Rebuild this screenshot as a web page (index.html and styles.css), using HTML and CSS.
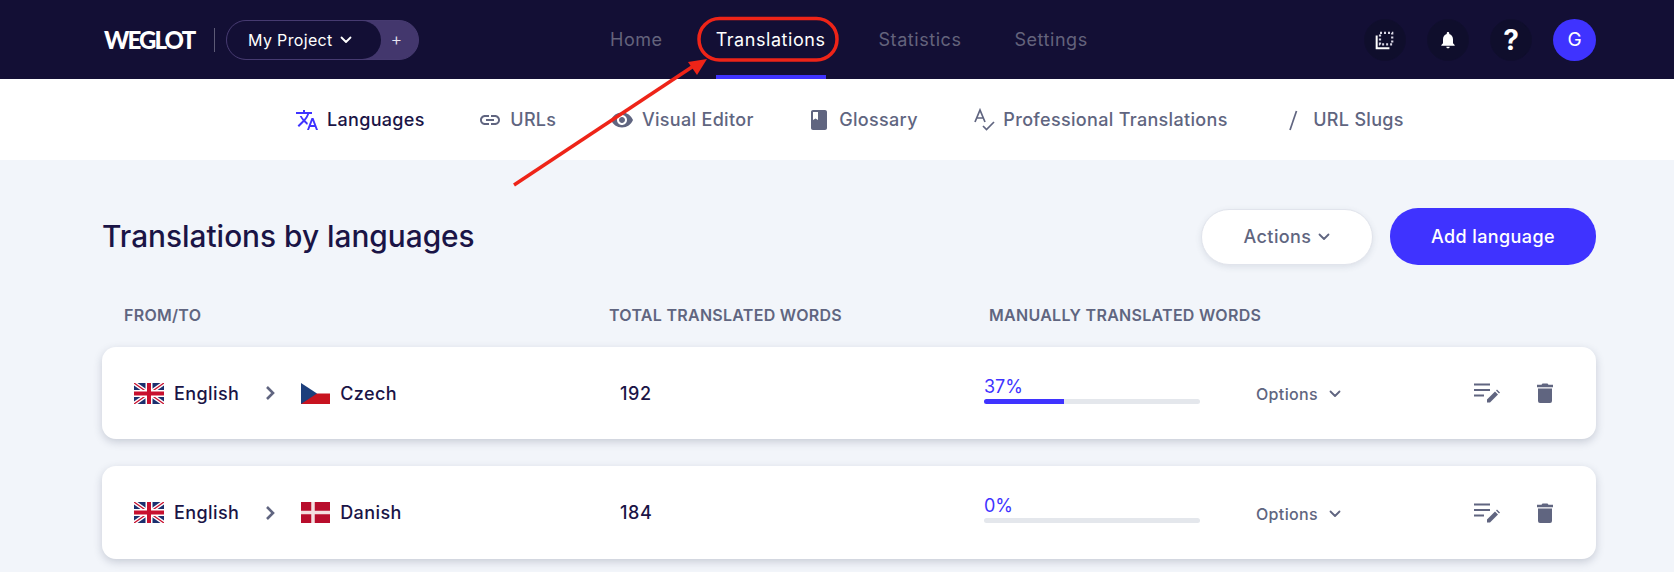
FILE: index.html
```html
<!DOCTYPE html>
<html lang="en">
<head>
<meta charset="utf-8">
<title>Weglot translations</title>
<link rel="stylesheet" href="styles.css">
</head>
<body>
<header class="topbar">
  <div class="brand">
    <span class="logo">WEGLOT</span>
    <span class="divider"></span>
    <div class="project">
      <span class="project-name">My Project
        <svg class="chev-sm" viewBox="0 0 12 8"><path d="M1.5 1.500 6 6l4.500-4.500"/></svg>
      </span>
      <span class="project-add">+</span>
    </div>
  </div>
  <nav class="mainnav">
    <a class="mainlink">Home</a>
    <a class="mainlink is-active">Translations</a>
    <a class="mainlink">Statistics</a>
    <a class="mainlink">Settings</a>
  </nav>
  <div class="tools">
    <span class="round">
      <svg class="tool-icon" viewBox="0 0 18 18"><path class="solid-line" d="M1.500 5v11.500H13"/><path class="dots" d="M4.500 2.500h11v10.500h-11z"/></svg>
    </span>
    <span class="round">
      <svg class="tool-icon" viewBox="0 0 24 24"><path fill="#fff" d="M12 22c1.100 0 2-.9 2-2h-4c0 1.100.89 2 2 2zm6-6v-5c0-3.070-1.640-5.640-4.500-6.320V4c0-.83-.67-1.500-1.500-1.500s-1.500.67-1.500 1.500v.68C7.630 5.360 6 7.920 6 11v5l-2 2v1h16v-1l-2-2z"/></svg>
    </span>
    <span class="round round-q">?</span>
    <span class="avatar">G</span>
  </div>
</header>

<nav class="subnav">
  <a class="sublink is-current">
    <svg class="sub-icon" viewBox="0 0 24 24"><path d="M12.870 15.070l-2.540-2.510.03-.03c1.740-1.940 2.980-4.170 3.710-6.530H17V4h-7V2H8v2H1v1.990h11.170C11.500 7.920 10.440 9.750 9 11.350 8.070 10.320 7.300 9.190 6.690 8h-2c.73 1.630 1.730 3.170 2.980 4.560l-5.090 5.020L4 19l5-5 3.110 3.110.76-2.040zM18.500 10h-2L12 22h2l1.120-3h4.750L21 22h2l-4.500-12zm-2.620 7l1.620-4.330L19.120 17h-3.240z"/></svg>
    Languages
  </a>
  <a class="sublink">
    <svg class="sub-icon" viewBox="0 0 24 24"><path d="M3.900 12c0-1.710 1.390-3.100 3.100-3.100h4V7H7c-2.760 0-5 2.240-5 5s2.240 5 5 5h4v-1.900H7c-1.710 0-3.100-1.390-3.100-3.100zM8 13h8v-2H8v2zm9-6h-4v1.900h4c1.710 0 3.100 1.390 3.100 3.100s-1.390 3.100-3.100 3.100h-4V17h4c2.760 0 5-2.240 5-5s-2.240-5-5-5z"/></svg>
    URLs
  </a>
  <a class="sublink">
    <svg class="sub-icon" viewBox="0 0 24 24"><path d="M12 4.500C7 4.500 2.730 7.610 1 12c1.730 4.390 6 7.500 11 7.500s9.270-3.110 11-7.500c-1.730-4.390-6-7.500-11-7.500zM12 17c-2.760 0-5-2.240-5-5s2.240-5 5-5 5 2.240 5 5-2.240 5-5 5zm0-8c-1.660 0-3 1.340-3 3s1.340 3 3 3 3-1.340 3-3-1.340-3-3-3z"/></svg>
    Visual Editor
  </a>
  <a class="sublink">
    <svg class="sub-icon" viewBox="0 0 24 24"><path d="M18 2H6c-1.100 0-2 .9-2 2v16c0 1.100.9 2 2 2h12c1.100 0 2-.9 2-2V4c0-1.100-.9-2-2-2zM6 4h5v8l-2.500-1.500L6 12V4z"/></svg>
    Glossary
  </a>
  <a class="sublink">
    <svg class="sub-icon sub-stroke" viewBox="0 0 24 24"><path d="M4 14 9 2l5 12M5.800 10h6.400M12 18l3.500 3.500L23 14"/></svg>
    Professional Translations
  </a>
  <a class="sublink">
    <svg class="sub-icon sub-stroke" viewBox="0 0 24 24"><path d="M15.500 3 9 22"/></svg>
    URL Slugs
  </a>
</nav>

<main class="content">
  <div class="title-row">
    <h1 class="title">Translations by languages</h1>
    <div class="actions">
      <button class="btn btn-light">Actions
        <svg class="chev-sm" viewBox="0 0 12 8"><path d="M1.500 1.500 6 6l4.500-4.500"/></svg>
      </button>
      <button class="btn btn-primary">Add language</button>
    </div>
  </div>

  <div class="col-heads">
    <span class="head-from">FROM/TO</span>
    <span class="head-total">TOTAL TRANSLATED WORDS</span>
    <span class="head-manual">MANUALLY TRANSLATED WORDS</span>
  </div>

  <section class="card">
    <div class="pair">
      <svg class="flag" viewBox="0 0 30 21"><use href="#uk"/></svg>
      <span class="lang">English</span>
      <svg class="pair-arrow" viewBox="0 0 10 16"><path d="M2 2l6 6-6 6"/></svg>
      <svg class="flag flag-target" viewBox="0 0 29 21"><rect width="29" height="10.500" fill="#fff"/><rect y="10.500" width="29" height="10.500" fill="#c8131f"/><path d="M0 0l16 10.500L0 21z" fill="#1d3f7c"/></svg>
      <span class="lang">Czech</span>
    </div>
    <div class="count">192</div>
    <div class="progress">
      <div class="pct">37%</div>
      <div class="track"><div class="fill" style="width:37%"></div></div>
    </div>
    <div class="options">Options
      <svg class="chev-sm" viewBox="0 0 12 8"><path d="M1.500 1.500 6 6l4.500-4.500"/></svg>
    </div>
    <svg class="edit-icon" viewBox="0 0 26 24"><path class="edit-lines" d="M0 3.500h16M0 9h16M0 14.500h10"/><path class="edit-pen" d="M13 21.500v-3l8-8 3 3-8 8zM22 9.500l1-1 3 3-1 1z"/></svg>
    <svg class="trash-icon" viewBox="0 0 16 20"><path d="M1 5.500h14V18a2 2 0 0 1-2 2H3a2 2 0 0 1-2-2zM0 1.800h4.500L5.500.5h5l1 1.300H16v2.400H0z"/></svg>
  </section>

  <section class="card">
    <div class="pair">
      <svg class="flag" viewBox="0 0 30 21"><use href="#uk"/></svg>
      <span class="lang">English</span>
      <svg class="pair-arrow" viewBox="0 0 10 16"><path d="M2 2l6 6-6 6"/></svg>
      <svg class="flag flag-target" viewBox="0 0 29 21"><rect width="29" height="21" fill="#b80d2c"/><path d="M0 10.500h29M12 0v21" stroke="#f4dfe0" stroke-width="3.500"/></svg>
      <span class="lang">Danish</span>
    </div>
    <div class="count">184</div>
    <div class="progress">
      <div class="pct">0%</div>
      <div class="track"><div class="fill" style="width:0%"></div></div>
    </div>
    <div class="options">Options
      <svg class="chev-sm" viewBox="0 0 12 8"><path d="M1.500 1.500 6 6l4.500-4.500"/></svg>
    </div>
    <svg class="edit-icon" viewBox="0 0 26 24"><path class="edit-lines" d="M0 3.500h16M0 9h16M0 14.500h10"/><path class="edit-pen" d="M13 21.500v-3l8-8 3 3-8 8zM22 9.500l1-1 3 3-1 1z"/></svg>
    <svg class="trash-icon" viewBox="0 0 16 20"><path d="M1 5.500h14V18a2 2 0 0 1-2 2H3a2 2 0 0 1-2-2zM0 1.800h4.500L5.500.5h5l1 1.300H16v2.400H0z"/></svg>
  </section>
</main>

<svg class="defs" width="0" height="0">
  <defs>
    <g id="uk">
      <rect width="30" height="21" fill="#1c2f6e"/>
      <path d="M0 0l30 21M30 0 0 21" stroke="#fff" stroke-width="4"/>
      <path d="M0 0l30 21M30 0 0 21" stroke="#c8102e" stroke-width="1.300"/>
      <path d="M15 0v21M0 10.500h30" stroke="#fff" stroke-width="7"/>
      <path d="M15 0v21M0 10.500h30" stroke="#c8102e" stroke-width="4"/>
    </g>
  </defs>
</svg>

<svg class="annotation" viewBox="0 0 1674 572">
  <rect class="mark" x="699" y="18.500" width="138" height="41.500" rx="20.500"/>
  <path class="mark" d="M514 185 695 65"/>
  <path class="mark-head" d="M707 59 688 62 697 75z"/>
</svg>
</body>
</html>
```
FILE: styles.css
```css
* { box-sizing: border-box; }
html, body { margin: 0; height: 572px; overflow: hidden; }
body {
  position: relative;
  background: #f2f5fa;
  font-family: Inter, "Liberation Sans", sans-serif;
  color: #1a1446;
}
.defs { position: absolute; }

/* top bar */
.topbar {
  display: flex;
  align-items: center;
  height: 79px;
  padding: 0 78px 0 104px;
  background: #130f35;
  color: #fff;
}
.brand { display: flex; align-items: center; width: 506px; }
.logo {
  width: 93px;
  font-family: Lato, "Liberation Sans", sans-serif;
  font-size: 24px;
  font-weight: 900;
  letter-spacing: -1.9px;
  line-height: 1;
}
.divider { width: 1px; height: 24px; margin: 0 11px 0 17px; background: #5d5a76; }
.project {
  display: flex;
  align-items: center;
  width: 193px;
  height: 40px;
  border: 1px solid #463a70;
  border-radius: 20px;
  background: #43376d;
}
.project-name {
  display: flex;
  align-items: center;
  gap: 7px;
  width: 154px;
  height: 38px;
  padding-left: 21px;
  border-radius: 19px;
  background: #130f35;
  font-size: 16px;
  letter-spacing: .35px;
}
.project-add {
  flex: 1;
  padding-right: 6px;
  text-align: center;
  font-size: 18px;
  font-weight: 300;
  color: #e8e6f2;
}
.chev-sm { width: 12px; height: 8px; flex: none; }
.chev-sm path { fill: none; stroke: currentColor; stroke-width: 1.800; stroke-linecap: round; stroke-linejoin: round; }

.mainnav { display: flex; align-items: stretch; gap: 53px; height: 79px; }
.mainlink {
  display: flex;
  align-items: center;
  border-bottom: 4px solid transparent;
  border-top: 4px solid transparent;
  font-size: 18px;
  font-weight: 400;
  letter-spacing: .55px;
  color: #64637c;
}
.mainlink.is-active { color: #fff; border-bottom-color: #3f33ff; }

.tools { display: flex; align-items: center; gap: 21px; margin-left: auto; }
.round, .avatar {
  display: flex;
  align-items: center;
  justify-content: center;
  width: 42px;
  height: 42px;
  border-radius: 50%;
}
.round { background: #0f0e2c; border: 1px solid #100e2e; }
.round-q { font-size: 28px; font-weight: 700; line-height: 1; }
.avatar { background: #3f33ff; font-size: 19px; width: 43px; }
.tool-icon { width: 20px; height: 20px; }
.solid-line { fill: none; stroke: #fff; stroke-width: 1.800; }
.dots { fill: none; stroke: #d8d6e4; stroke-width: 2; stroke-dasharray: 1.800 1.800; }

/* sub navigation */
.subnav {
  display: flex;
  align-items: center;
  height: 81px;
  padding-left: 295px;
  background: #fff;
}
.sublink {
  display: flex;
  align-items: center;
  gap: 8px;
  margin-right: 53.500px;
  font-size: 18px;
  font-weight: 500;
  letter-spacing: .32px;
  color: #606580;
}
.sublink.is-current { color: #1a1446; }
.sub-icon { width: 24px; height: 24px; fill: #606580; flex: none; }
.is-current .sub-icon { fill: #3f33ff; }
.sub-stroke { fill: none; stroke: #606580; stroke-width: 1.700; }

/* content */
.content { padding: 48px 78px 0 102px; }
.title-row { display: flex; align-items: center; justify-content: space-between; height: 57px; }
.title { margin: 0 0 2px; font-size: 29.800px; font-weight: 500; color: #1a1446; }
.actions { display: flex; align-items: center; gap: 17px; }
.btn {
  display: flex;
  align-items: center;
  justify-content: center;
  height: 56px;
  border-radius: 28px;
  font-family: inherit;
  font-size: 18px;
  font-weight: 500;
  letter-spacing: .4px;
}
.btn-light {
  gap: 7px;
  width: 172px;
  border: 1px solid #e1e4ec;
  background: #fff;
  color: #606580;
  box-shadow: 0 2px 6px rgba(60, 70, 100, .12);
}
.btn-primary { width: 206px; height: 57px; border: 0; background: #3f33ff; color: #fff; }

.col-heads {
  display: flex;
  align-items: center;
  height: 82px;
  padding: 18px 0 0 22px;
  font-size: 16px;
  font-weight: 600;
  letter-spacing: .28px;
  color: #606580;
}
.head-from { width: 485px; }
.head-total { width: 380px; }

.card {
  display: flex;
  align-items: center;
  height: 92px;
  margin-bottom: 27px;
  padding-left: 32px;
  border-radius: 14px;
  background: #fff;
  box-shadow: 0 3px 8px rgba(50, 60, 90, .22);
}
.card + .card { height: 93px; }
.pair { display: flex; align-items: center; width: 486px; }
.flag { width: 30px; height: 21px; flex: none; }
.flag-target { width: 29px; }
.lang { margin-left: 10px; font-size: 18px; font-weight: 500; letter-spacing: .4px; color: #1a1446; }
.pair-arrow {
  width: 10px;
  height: 16px;
  margin: 0 26px;
  fill: none;
  stroke: #606580;
  stroke-width: 2.600;
}
.count { width: 364px; font-size: 18px; font-weight: 500; letter-spacing: .6px; }
.progress { width: 272px; padding-bottom: 7px; }
.pct { font-size: 18px; line-height: 22px; color: #3f33ff; }
.track { width: 216px; height: 5px; margin-top: 1px; border-radius: 3px; background: #e4e7ec; overflow: hidden; }
.fill { height: 100%; background: #3f33ff; }
.options {
  display: flex;
  align-items: center;
  gap: 11px;
  width: 218px;
  padding-top: 2px;
  font-size: 16px;
  font-weight: 500;
  letter-spacing: .35px;
  color: #606580;
}
.edit-icon { width: 26px; height: 24px; flex: none; }
.edit-lines { fill: none; stroke: #606580; stroke-width: 2; }
.edit-pen { fill: #606580; }
.trash-icon { width: 16px; height: 20px; margin-left: 37px; fill: #606580; flex: none; }

/* annotation */
.annotation {
  position: absolute;
  top: 0;
  left: 0;
  width: 1674px;
  height: 572px;
  pointer-events: none;
}
.mark { fill: none; stroke: #ee2418; stroke-width: 3.500; }
.mark-head { fill: #ee2418; }
```
